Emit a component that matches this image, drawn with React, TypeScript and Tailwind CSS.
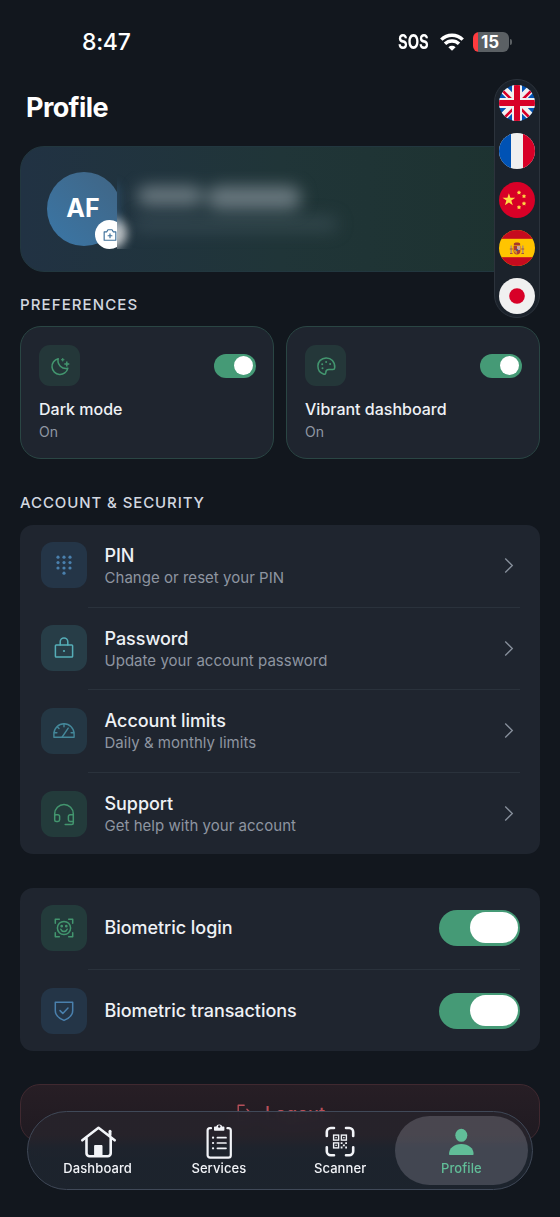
import { useState } from "react";
import type { ReactNode } from "react";

interface IconProps {
  className?: string;
  strokeWidth?: number;
  children: ReactNode;
}

function Icon({ className = "size-6", strokeWidth = 1.5, children }: IconProps) {
  return (
    <svg
      viewBox="0 0 24 24"
      className={className}
      fill="none"
      stroke="currentColor"
      strokeWidth={strokeWidth}
      strokeLinejoin="round"
      strokeLinecap="round"
    >
      {children}
    </svg>
  );
}

function StatusBar() {
  return (
    <div className="flex h-[84px] items-center justify-between pl-[82px] pr-[48px] text-white">
      <span className="text-[23px] font-medium tracking-[-0.3px]">8:47</span>
      <div className="flex items-center">
        <span className="w-[32px] origin-left scale-x-[0.74] text-[20px] font-bold">SOS</span>
        <svg viewBox="0 0 24 18" className="ml-[10px] h-[18px] w-6" fill="none" stroke="#fff" strokeWidth="3.4">
          <path d="M1.3 6.6a15.2 15.2 0 0 1 21.4 0" />
          <path d="M5 10.8a10 10 0 0 1 14 0" />
          <path d="M12 17.8 8.4 14.2a5.1 5.1 0 0 1 7.2 0Z" fill="#fff" stroke="none" />
        </svg>
        <div className="ml-[9px] flex h-5 w-[36px] items-center justify-center overflow-hidden rounded-[6px] bg-linear-to-r from-[#ff3b3f] from-[14%] to-[#5b6064] to-[14%] pr-[2px] text-[17px] font-bold leading-none">
          15
        </div>
        <div className="ml-[1px] h-[6px] w-[2px] rounded-r-full bg-[#5b6064]" />
      </div>
    </div>
  );
}

function UkFlag() {
  return (
    <g>
      <rect width="36" height="36" fill="#0052b4" />
      <path d="M0 0 36 36M36 0 0 36" stroke="#f0f0f0" strokeWidth="8" />
      <path d="M0 0 15 15M36 36 21 21" stroke="#d80027" strokeWidth="2.6" transform="translate(-1 1)" />
      <path d="M36 0 21 15M0 36 15 21" stroke="#d80027" strokeWidth="2.6" transform="translate(1 1)" />
      <path d="M18 0V36M0 18H36" stroke="#f0f0f0" strokeWidth="10" />
      <path d="M18 0V36M0 18H36" stroke="#d80027" strokeWidth="6" />
    </g>
  );
}

function FranceFlag() {
  return (
    <g>
      <rect width="36" height="36" fill="#f0f0f0" />
      <rect width="12" height="36" fill="#0052b4" />
      <rect x="24" width="12" height="36" fill="#d80027" />
    </g>
  );
}

function ChinaFlag() {
  return (
    <g>
      <rect width="36" height="36" fill="#d80027" />
      <g fill="#ffda44">
        <path d="m9.9 11.2 1.5 4.6h4.9l-4 2.8 1.5 4.6-3.9-2.8-4 2.8 1.5-4.6-3.9-2.8h4.9Z" />
        <path d="m20 8.3.7 1.3 1.5.3-1 1.1.2 1.5-1.4-.7-1.4.7.2-1.5-1-1.1 1.5-.3Z" />
        <path d="m25 11.9.7 1.3 1.5.3-1 1.1.2 1.5-1.4-.7-1.4.7.2-1.5-1-1.1 1.5-.3Z" />
        <path d="m25 19.2.7 1.3 1.5.3-1 1.1.2 1.5-1.4-.7-1.4.7.2-1.5-1-1.1 1.5-.3Z" />
        <path d="m20 23 .7 1.3 1.5.3-1 1.1.2 1.5-1.4-.7-1.4.7.2-1.5-1-1.1 1.5-.3Z" />
      </g>
    </g>
  );
}

function SpainFlag() {
  return (
    <g>
      <rect width="36" height="36" fill="#ffc400" />
      <rect width="36" height="8.8" fill="#c60b1e" />
      <rect y="27.2" width="36" height="8.8" fill="#c60b1e" />
      <path d="M12.2 15.5v7.5M23.8 15.5v7.5" stroke="#b8926a" strokeWidth="1.6" />
      <path d="M11 23.5h2.6M22.4 23.5H25M10.8 19h3M22.2 19h3" stroke="#a4513c" strokeWidth="1.2" />
      <path d="M14.6 15.8h6.8v5.2a3.4 3.4 0 0 1-6.8 0Z" fill="#ad3b32" />
      <path d="M18 16h3.2v4H18Z" fill="#c9a79c" />
      <path d="M14.9 20H18v3.9q-2.4-.5-3.1-2.4Z" fill="#d18b2c" />
      <circle cx="18" cy="20" r="1.1" fill="#34578e" />
      <path d="M15 15.2c-.8-2.4 1.2-2.7 3-2.7s3.8.3 3 2.7Z" fill="#a4372c" />
    </g>
  );
}

function JapanFlag() {
  return (
    <g>
      <rect width="36" height="36" fill="#f0f0f0" />
      <circle cx="18" cy="18" r="7.8" fill="#d80027" />
    </g>
  );
}

const flags = [
  { code: "en", art: <UkFlag /> },
  { code: "fr", art: <FranceFlag /> },
  { code: "zh", art: <ChinaFlag /> },
  { code: "es", art: <SpainFlag /> },
  { code: "ja", art: <JapanFlag /> },
];

function LanguagePicker() {
  return (
    <div className="absolute right-5 top-[79px] z-10 flex h-[239px] w-[46px] flex-col items-center justify-between rounded-full border border-[#2c333c] bg-[#1b222b] pb-[3px] pt-[5px]">
      {flags.map((flag) => (
        <svg key={flag.code} viewBox="0 0 36 36" className="size-9 rounded-full">
          {flag.art}
        </svg>
      ))}
    </div>
  );
}

function ProfileCard() {
  return (
    <div className="flex h-[126px] rounded-[24px] border border-[#22373f] bg-linear-to-r from-[#213243] via-[#203538] to-[#1d322f] pl-[26px] pt-[24px]">
      <div className="relative h-[79px] w-[70px] shrink-0 overflow-hidden">
        <div className="mt-[1px] flex size-[74px] items-center justify-center rounded-full bg-linear-to-bl from-[#406584] to-[#3a76a6] pr-[2px] text-[25px] font-bold text-white">
          AF
        </div>
        <div className="absolute left-[48px] top-[49px] flex size-[29px] items-center justify-center rounded-full bg-white text-[#3f719b]">
          <Icon className="size-[14px]" strokeWidth={2}>
            <path d="M2 6.5h4.5L8.500 3h7l2 3.500H22V21H2Z" />
            <path d="M12 10v6.600M8.700 13.300h6.600" />
          </Icon>
        </div>
      </div>
      {/* name and email are hidden behind a blur */}
      <div className="relative h-[78px] w-[260px] overflow-hidden">
        <div className="absolute -left-[22px] top-[46px] size-8 rounded-full bg-white/70 blur-[5px]" />
        <div className="absolute -left-[13px] top-[12px] h-[45px] w-4 rounded-full bg-[#3a6a90]/40 blur-[5px]" />
        <div className="flex gap-[4px] pl-[20px] pt-[15px] blur-[8px]">
          <div className="h-[20px] w-[66px] rounded-full bg-[#74828a]/85" />
          <div className="h-[24px] w-[94px] rounded-full bg-[#74828a]/85" />
        </div>
        <div className="ml-4 mt-[6px] h-4 w-[205px] rounded-full bg-[#4c6069]/40 blur-[8px]" />
      </div>
    </div>
  );
}

function SectionTitle({ children }: { children: ReactNode }) {
  return <h2 className="text-[15px] font-medium leading-[21px] tracking-[0.9px] text-[#d3d8e0]">{children}</h2>;
}

interface PreferenceCardProps {
  title: string;
  icon: ReactNode;
}

function PreferenceCard({ title, icon }: PreferenceCardProps) {
  const [on, setOn] = useState(true);

  return (
    <div className="h-[133px] flex-1 rounded-[21px] border border-[#2a4644] bg-[#1f252f] pl-[18px] pr-[17px] pt-[18px]">
      <div className="flex items-center justify-between">
        <div className="flex size-[41px] items-center justify-center rounded-[11px] bg-[#243739] text-[#43966f]">
          {icon}
        </div>
        <button
          onClick={() => setOn(!on)}
          className={`flex h-6 w-[42px] items-center rounded-full px-[3px] ${on ? "justify-end bg-[#459a76]" : "bg-[#3a424e]"}`}
        >
          <span className="size-[19px] rounded-full bg-white" />
        </button>
      </div>
      <p className="mt-[12px] text-[16px] font-[550] leading-[23px] text-[#eef1f5]">{title}</p>
      <p className="text-[14px] leading-[21px] text-[#8f97a3]">{on ? "On" : "Off"}</p>
    </div>
  );
}

interface RowProps {
  title: string;
  subtitle?: string;
  tile: string;
  icon: ReactNode;
  last?: boolean;
  end: ReactNode;
}

function Row({ title, subtitle, tile, icon, last, end }: RowProps) {
  return (
    <div className={`relative flex items-center pl-[20.5px] pr-5 ${last ? "h-[81px]" : "h-[82.7px] pb-[2px]"}`}>
      <div className={`flex size-[46px] items-center justify-center rounded-[12px] ${tile}`}>{icon}</div>
      <div className={`ml-[18px] flex-1 ${subtitle ? "pt-[2px]" : ""}`}>
        <p className="text-[18px] font-[550] leading-[23px] tracking-[-0.05px] text-[#eef1f5]">{title}</p>
        {subtitle && <p className="text-[15px] leading-[22px] tracking-[0.03px] text-[#8e95a1]">{subtitle}</p>}
      </div>
      {end}
      {!last && <div className="absolute bottom-0 left-[68px] right-5 h-px bg-[#2a323c]" />}
    </div>
  );
}

function Chevron() {
  return (
    <svg viewBox="0 0 10 18" className="mr-[6px] h-[17px] w-[10px]" fill="none" stroke="#87909c" strokeWidth="1.4">
      <path d="m1 1.5 7.500 7.500L1 16.500" />
    </svg>
  );
}

function WideSwitch() {
  const [on, setOn] = useState(true);

  return (
    <button
      onClick={() => setOn(!on)}
      className={`flex h-9 w-[81px] items-center rounded-full px-[2.5px] ${on ? "justify-end bg-[#459a76]" : "bg-[#3a424e]"}`}
    >
      <span className="h-[31px] w-[48px] rounded-full bg-white" />
    </button>
  );
}

function MoonIcon() {
  return (
    <svg viewBox="0 0 20 20" className="size-5" fill="none" stroke="currentColor" strokeWidth="1.5" strokeLinejoin="round">
      <path d="M8.2 2.7A8 8 0 1 0 17.8 12.3 8 8 0 0 1 8.2 2.7Z" />
      <path d="M16.8 5.6v5M14.3 8.1h5" />
      <path d="m12.7 2 .5 1.2 1.2.5-1.2.5-.5 1.2-.5-1.2-1.2-.5 1.2-.5Z" fill="currentColor" strokeWidth="0.5" />
    </svg>
  );
}

function PaletteIcon() {
  return (
    <svg viewBox="0 0 20 20" className="size-5" fill="none" stroke="currentColor" strokeWidth="1.5">
      <path d="M10 1.9C5.2 2.1 1.9 5.6 1.9 10.1c0 4 2.6 7.2 6 8.1 1.2.3 1.9-.6 1.9-1.7 0-2 1.2-3 3-3h4.2c1 0 1.6-.5 1.7-1.6C19.2 6 15 1.7 10 1.9Z" />
      <g fill="currentColor" stroke="none">
        <circle cx="6.2" cy="8.2" r="1" />
        <circle cx="10.1" cy="6" r="1" />
        <circle cx="14.1" cy="8" r="1" />
        <circle cx="6.5" cy="12.3" r="1" />
      </g>
    </svg>
  );
}

function KeypadIcon() {
  return (
    <svg viewBox="0 0 24 24" className="size-6" fill="currentColor">
      {[4.2, 9.6, 15].map((y) => [6, 12, 18].map((x) => <circle key={`${x}-${y}`} cx={x} cy={y} r="1.6" />))}
      <circle cx="12" cy="20.2" r="1.6" />
    </svg>
  );
}

function LockIcon() {
  return (
    <Icon>
      <rect x="3.4" y="9" width="17.2" height="12" rx="0.8" />
      <path d="M8.2 9V5.8a3.8 3.8 0 0 1 7.6 0V9" />
      <circle cx="12" cy="15" r="1.1" fill="currentColor" stroke="none" />
    </Icon>
  );
}

function GaugeIcon() {
  return (
    <Icon strokeWidth={1.4}>
      <path d="M1.9 18.2v-3.4a10.1 10.1 0 0 1 20.2 0v3.4Z" />
      <path d="M10.2 18 16.2 9.2M12 4.8v3M2.2 13.7h2.7M19.1 13.7h2.7M5.4 8l1.600 1.500" />
    </Icon>
  );
}

function HeadsetIcon() {
  return (
    <Icon>
      <path d="M2.7 13.5v-1.7a9.3 9.3 0 0 1 18.6 0v9.2a1.5 1.5 0 0 1-1.5 1.5H13.2" />
      <path d="M2.7 12.8h3.2a1.7 1.7 0 0 1 1.7 1.7v3.3a1.7 1.7 0 0 1-1.7 1.7H4.2a1.5 1.5 0 0 1-1.5-1.5Z" />
      <path d="M21.3 12.8h-3.2a1.7 1.7 0 0 0-1.7 1.7v3.3a1.7 1.7 0 0 0 1.7 1.7h3.2" />
    </Icon>
  );
}

function FaceIcon() {
  return (
    <Icon>
      <path d="M3.3 7.3v-4h4M16.7 3.3h4v4M20.7 16.7v4h-4M7.3 20.7h-4v-4" />
      <circle cx="12" cy="12" r="6.6" />
      <path d="M8.8 13.3a3.4 3.4 0 0 0 6.4 0" />
      <circle cx="9.7" cy="10.2" r="0.6" fill="currentColor" />
      <circle cx="14.3" cy="10.2" r="0.6" fill="currentColor" />
    </Icon>
  );
}

function ShieldIcon() {
  return (
    <Icon>
      <path d="M3.3 3.3h17.4v8.200c0 4.800-4 8-8.700 9.900-4.700-1.900-8.700-5.100-8.700-9.900Z" />
      <path d="m8 11.600 2.800 2.800 5.200-5.400" />
    </Icon>
  );
}

function HouseIcon() {
  return (
    <svg viewBox="0 0 36 36" className="size-9 overflow-visible" fill="none" stroke="currentColor" strokeWidth="2.6" strokeLinejoin="round" strokeLinecap="round">
      <path d="M2.3 16.3 18.5 3.8 34.7 16.3" />
      <path d="M6.5 14.500v14.700a3 3 0 0 0 3 3h18.200a3 3 0 0 0 3-3V14.500" />
      <path d="M30 11V7.200" strokeWidth="3" />
      <path d="M15 21.500h7v10h-7Z" fill="currentColor" strokeWidth="1" />
    </svg>
  );
}

function ClipboardIcon() {
  return (
    <svg viewBox="0 0 36 36" className="size-9 overflow-visible" fill="none" stroke="currentColor" strokeWidth="2.2" strokeLinejoin="round" strokeLinecap="round">
      <path d="M10 4.2H9a2.4 2.400 0 0 0-2.400 2.400v24.600A2.400 2.400 0 0 0 9 33.600h18.400a2.400 2.400 0 0 0 2.400-2.400V6.600a2.400 2.400 0 0 0-2.400-2.400h-1" />
      <path d="M13.800 6V3.200h1.900a2.600 2.600 0 0 1 5 0h1.900V6Z" fill="currentColor" strokeWidth="1.600" />
      <circle cx="18.200" cy="2.500" r="1.200" fill="#26222b" stroke="none" />
      <path d="M16.400 13.700h8.600M16.400 19h8.600M16.400 24.300h8.600" strokeWidth="1.700" />
      <path d="M12 13.700h.1M12 19h.1M12 24.300h.1" strokeWidth="2.200" />
    </svg>
  );
}

function ScannerIcon() {
  return (
    <svg viewBox="0 0 36 36" className="size-9" fill="none" stroke="currentColor">
      <path
        d="M4.800 12V8a4 4 0 0 1 4-4H12M24 4h3.200a4 4 0 0 1 4 4v4M31.200 23.200v4a4 4 0 0 1-4 4H24M12 31.200H8.800a4 4 0 0 1-4-4v-4"
        strokeWidth="2.600"
        strokeLinecap="round"
      />
      <g strokeWidth="1.400">
        <rect x="11.600" y="11.100" width="5" height="5" />
        <rect x="19.400" y="11.100" width="5" height="5" />
        <rect x="11.600" y="18.900" width="5" height="5" />
      </g>
      <g fill="currentColor" stroke="none">
        <path d="M13.400 12.900h1.400v1.400h-1.400ZM21.200 12.900h1.400v1.400h-1.400ZM13.400 20.700h1.400v1.400h-1.400Z" />
        <path d="M18.700 18.300h1.800v1.800h-1.800ZM23.200 18.300H25v1.800h-1.800ZM20.900 20.400h1.900v1.900h-1.900ZM18.700 22.600h1.800v1.800h-1.800ZM23.200 22.600H25v1.800h-1.800Z" />
      </g>
    </svg>
  );
}

function PersonIcon() {
  return (
    <svg viewBox="0 0 36 36" className="size-9" fill="currentColor">
      <ellipse cx="18.300" cy="11.300" rx="6" ry="6.500" />
      <path d="M6 30c0-5.600 4.900-10 12.300-10s12.300 4.400 12.300 10c0 .6-.5 1-1 1H7c-.5 0-1-.4-1-1Z" />
    </svg>
  );
}

const accountRows = [
  { title: "PIN", subtitle: "Change or reset your PIN", tile: "bg-[#243547] text-[#4a80ad]", icon: <KeypadIcon /> },
  { title: "Password", subtitle: "Update your account password", tile: "bg-[#273d47] text-[#56aeb8]", icon: <LockIcon /> },
  { title: "Account limits", subtitle: "Daily & monthly limits", tile: "bg-[#243744] text-[#44889a]", icon: <GaugeIcon /> },
  { title: "Support", subtitle: "Get help with your account", tile: "bg-[#233b3b] text-[#43966f]", icon: <HeadsetIcon /> },
];

const navItems = [
  { label: "Dashboard", icon: <HouseIcon /> },
  { label: "Services", icon: <ClipboardIcon /> },
  { label: "Scanner", icon: <ScannerIcon /> },
  { label: "Profile", icon: <PersonIcon />, active: true },
];

function BottomNav() {
  return (
    <nav className="absolute bottom-[27px] left-[27px] flex h-[79px] w-[506px] rounded-full border border-[#404958] bg-linear-to-b from-[#27232b]/95 from-[30%] to-[#1e242e]/95 to-[48%] pl-[9px] pr-[10px] backdrop-blur-[8px]">
      {navItems.map((item) => (
        <div
          key={item.label}
          className={`relative flex flex-1 flex-col items-center pt-[12px] ${item.active ? "text-[#61bd98]" : "text-[#f2f4f8]"}`}
        >
          {item.active && <div className="absolute -left-[6px] -right-[6px] bottom-1 top-1 rounded-full bg-[#8a8a94]/35" />}
          <div className="relative">{item.icon}</div>
          <span className="relative text-[13px] font-medium leading-[17px] tracking-[0.1px]">{item.label}</span>
        </div>
      ))}
    </nav>
  );
}

export default function App() {
  return (
    <div className="relative h-[1217px] w-[560px] overflow-hidden bg-[#12171e] px-5 font-['Inter',sans-serif]">
      <div className="-mx-5">
        <StatusBar />
      </div>
      <h1 className="ml-[6px] mt-[6px] text-[27px] font-bold leading-9 tracking-[-0.6px] text-white">Profile</h1>
      <LanguagePicker />

      <div className="mt-[20px]">
        <ProfileCard />
      </div>

      <div className="mt-[22px]">
        <SectionTitle>
          <span className="tracking-[1.1px]">PREFERENCES</span>
        </SectionTitle>
      </div>
      <div className="mt-[11px] flex gap-3">
        <PreferenceCard title="Dark mode" icon={<MoonIcon />} />
        <PreferenceCard title="Vibrant dashboard" icon={<PaletteIcon />} />
      </div>

      <div className="mt-[33px]">
        <SectionTitle>ACCOUNT & SECURITY</SectionTitle>
      </div>
      <div className="mt-[12px] rounded-[13px] bg-[#1f252f]">
        {accountRows.map((row, i) => (
          <Row key={row.title} {...row} last={i === accountRows.length - 1} end={<Chevron />} />
        ))}
      </div>

      <div className="mt-[33.5px] rounded-[13px] bg-[#1f252f]">
        <Row title="Biometric login" tile="bg-[#233b3b] text-[#43966f]" icon={<FaceIcon />} end={<WideSwitch />} />
        <Row
          title="Biometric transactions"
          tile="bg-[#243547] text-[#4a80ad]"
          icon={<ShieldIcon />}
          last
          end={<WideSwitch />}
        />
      </div>

      <button className="mt-[33px] flex h-[58px] w-full items-center justify-center gap-2 rounded-[20px] border border-[#402930] bg-linear-to-b from-[#271e25] to-[#1f1a21] text-[18px] font-medium text-[#b7505a]">
        <Icon className="size-[22px]">
          <path d="M10 3.5H3.500v17H10M13 8l4 4-4 4M17 12H8" />
        </Icon>
        Logout
      </button>

      <BottomNav />
    </div>
  );
}
